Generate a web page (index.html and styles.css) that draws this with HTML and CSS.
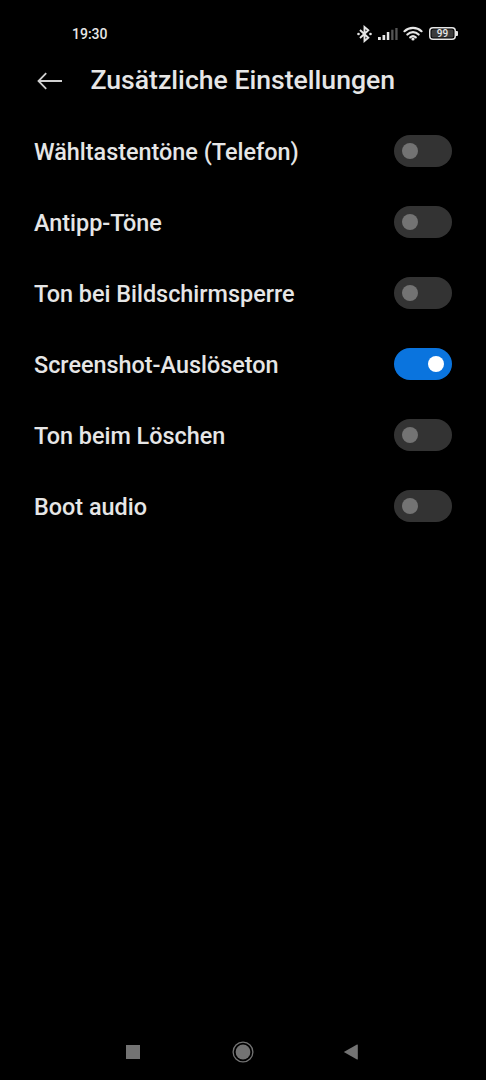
FILE: index.html
```
<!DOCTYPE html>
<html lang="de">
<head>
    <meta charset="UTF-8">
    <meta name="viewport" content="width=device-width, initial-scale=1.0">
    <title>Zusätzliche Einstellungen</title>
    <link rel="stylesheet" href="styles.css">
</head>
<body>
    <div class="phone">
        <div class="status">
            <span class="time">19:30</span>
            <div class="status-icons">
                <svg class="bluetooth" width="15" height="18" viewBox="0 0 15 18">
                    <path d="M3 5l8.300 7.800L7.500 16V2l3.800 3.200L3 13"/>
                    <circle cx="1.500" cy="9" r="1.300"/>
                    <circle cx="13.500" cy="9" r="1.300"/>
                </svg>
                <svg class="signal" width="20" height="12" viewBox="0 0 20 12">
                    <path class="full" d="M0 9h2.800v3H0zM4.500 7h2.700v5H4.500zM8.800 4h2.500v8H8.800z"/>
                    <path class="empty" d="M13.200 1.700h2.300V12h-2.300zM17.300 0h2.300v12h-2.300z"/>
                </svg>
                <svg class="wifi" width="20" height="15" viewBox="0 0 20 15">
                    <path d="M1.500 5.200a12.300 12.300 0 0 1 17 0M4.400 8.500a8 8 0 0 1 11.200 0M7.300 11.400a4 4 0 0 1 5.400 0"/>
                    <circle cx="10" cy="13" r="1.600"/>
                </svg>
                <div class="battery">99</div>
            </div>
        </div>

        <div class="header">
            <svg class="back" width="26" height="18" viewBox="0 0 26 18">
                <path d="M25 9H1.500M9.200 1.200L1.500 9l7.700 7.800"/>
            </svg>
            <h1>Zusätzliche Einstellungen</h1>
        </div>

        <div class="list">
            <div class="row">
                <span>Wähltastentöne (Telefon)</span>
                <div class="switch"><div class="knob"></div></div>
            </div>
            <div class="row">
                <span>Antipp-Töne</span>
                <div class="switch"><div class="knob"></div></div>
            </div>
            <div class="row">
                <span>Ton bei Bildschirmsperre</span>
                <div class="switch"><div class="knob"></div></div>
            </div>
            <div class="row">
                <span>Screenshot-Auslöseton</span>
                <div class="switch on"><div class="knob"></div></div>
            </div>
            <div class="row">
                <span>Ton beim Löschen</span>
                <div class="switch"><div class="knob"></div></div>
            </div>
            <div class="row">
                <span>Boot audio</span>
                <div class="switch"><div class="knob"></div></div>
            </div>
        </div>

        <div class="navbar">
            <svg width="22" height="22" viewBox="0 0 22 22">
                <path d="M4 4h14v14H4z"/>
            </svg>
            <svg class="home" width="22" height="22" viewBox="0 0 22 22">
                <circle class="ring" cx="11" cy="11" r="9.900"/>
                <circle cx="11" cy="11" r="7.400"/>
            </svg>
            <svg width="22" height="22" viewBox="0 0 22 22">
                <path d="M3.800 11L17 3.500q.8-.3.800.6v13.800q0 .9-.8.600z"/>
            </svg>
        </div>
    </div>
</body>
</html>
```

FILE: styles.css
```
body {
    margin: 0;
    background: #000;
    color: #e6e6e6;
    font-family: Roboto, sans-serif;
    font-weight: 500;
}

.phone {
    box-sizing: border-box;
    height: 1080px;
    display: flex;
    flex-direction: column;
}

.status {
    box-sizing: border-box;
    height: 46px;
    padding: 21px 27px 0 72px;
    display: flex;
    justify-content: space-between;
}

.time {
    font-size: 14px;
    line-height: 26px;
}

.status-icons {
    height: 25px;
    display: flex;
    align-items: center;
}

.bluetooth {
    margin-right: 6px;
    fill: #e6e6e6;
}

.bluetooth path {
    fill: none;
    stroke: #e6e6e6;
    stroke-width: 1.9;
}

.signal {
    margin-right: 5px;
}

.full {
    fill: #e6e6e6;
}

.empty {
    fill: #555;
}

.wifi {
    margin-right: 6px;
    fill: #e6e6e6;
}

.wifi path {
    fill: none;
    stroke: #e6e6e6;
    stroke-width: 2.2;
    stroke-linecap: round;
}

.battery {
    box-sizing: border-box;
    position: relative;
    width: 27px;
    height: 13px;
    margin-right: 3px;
    border-radius: 4px;
    background: #3c3c3c;
    box-shadow: inset 0 0 0 1.5px #e6e6e6, inset 0 0 0 2.5px #000;
    font-size: 10px;
    line-height: 14px;
    text-align: center;
}

.battery::after {
    content: "";
    position: absolute;
    top: 4px;
    right: -2px;
    width: 2px;
    height: 5px;
    border-radius: 0 1px 1px 0;
    background: #e6e6e6;
}

.header {
    height: 69px;
    padding-left: 37px;
    display: flex;
    align-items: center;
    gap: 27.5px;
}

.header h1 {
    margin: 0 0 2px;
    font-size: 26.6px;
    font-weight: 500;
}

.back {
    fill: none;
    stroke: #d0d0d0;
    stroke-width: 1.8;
}

.list {
    flex: 1;
    padding: 0 34px;
}

.row {
    height: 71px;
    display: flex;
    align-items: center;
    justify-content: space-between;
    font-size: 23.4px;
}

.row span {
    padding-top: 2px;
}

.switch {
    box-sizing: border-box;
    width: 58px;
    height: 32px;
    padding: 0 8px;
    border-radius: 16px;
    background: #333;
    display: flex;
    align-items: center;
}

.knob {
    width: 16px;
    height: 16px;
    border-radius: 50%;
    background: #737373;
}

.on {
    background: #0a74de;
    justify-content: flex-end;
}

.on .knob {
    background: #fff;
}

.navbar {
    height: 56px;
    padding: 0 124px 0 122px;
    display: flex;
    align-items: center;
    justify-content: space-between;
    fill: #737373;
}

.home {
    margin-left: 2px;
}

.ring {
    fill: none;
    stroke: #737373;
    stroke-width: 1.3;
}
```
